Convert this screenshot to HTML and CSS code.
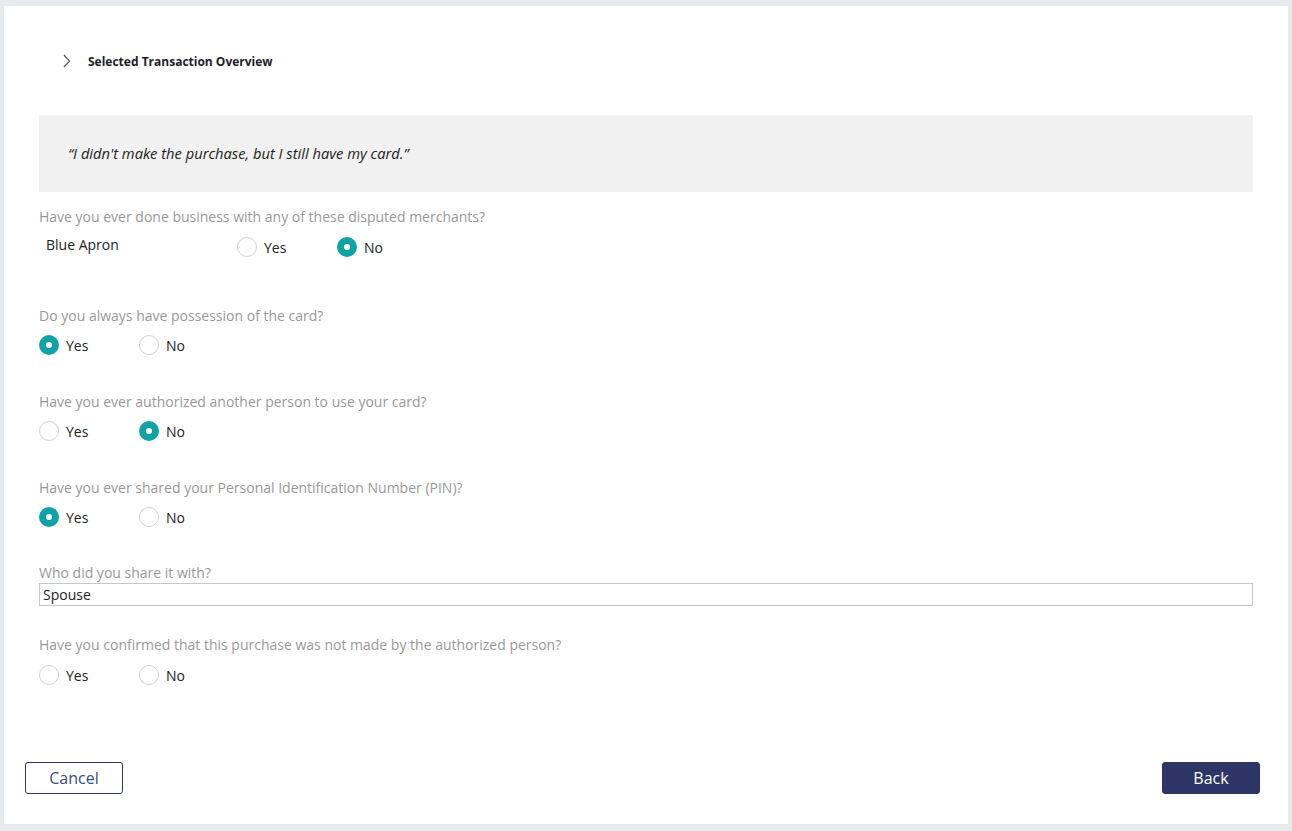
FILE: index.html
```html
<!DOCTYPE html>
<html lang="en">
<head>
    <meta charset="UTF-8">
    <title>Dispute Questions</title>
    <link rel="stylesheet" href="styles.css">
</head>
<body>
    <div class="panel">
        <div class="overview">
            <svg class="chevron" width="8" height="14" viewBox="0 0 8 14"><path d="M1 1 L6.5 7 L1 13" fill="none" stroke="#555" stroke-width="1.2"/></svg>
            <span class="overview-title">Selected Transaction Overview</span>
        </div>

        <div class="quote">&ldquo;I didn't make the purchase, but I still have my card.&rdquo;</div>

        <div class="question q-merchant">
            <div class="label">Have you ever done business with any of these disputed merchants?</div>
            <div class="merchant-row">
                <span class="merchant">Blue Apron</span>
                <div class="options">
                    <span class="option"><span class="radio"></span>Yes</span>
                    <span class="option"><span class="radio checked"></span>No</span>
                </div>
            </div>
        </div>

        <div class="question">
            <div class="label">Do you always have possession of the card?</div>
            <div class="options">
                <span class="option"><span class="radio checked"></span>Yes</span>
                <span class="option"><span class="radio"></span>No</span>
            </div>
        </div>

        <div class="question">
            <div class="label">Have you ever authorized another person to use your card?</div>
            <div class="options">
                <span class="option"><span class="radio"></span>Yes</span>
                <span class="option"><span class="radio checked"></span>No</span>
            </div>
        </div>

        <div class="question">
            <div class="label">Have you ever shared your Personal Identification Number (PIN)?</div>
            <div class="options">
                <span class="option"><span class="radio checked"></span>Yes</span>
                <span class="option"><span class="radio"></span>No</span>
            </div>
        </div>

        <div class="question q-text">
            <div class="label">Who did you share it with?</div>
            <input type="text" class="text-input" value="Spouse">
        </div>

        <div class="question">
            <div class="label">Have you confirmed that this purchase was not made by the authorized person?</div>
            <div class="options">
                <span class="option"><span class="radio"></span>Yes</span>
                <span class="option"><span class="radio"></span>No</span>
            </div>
        </div>

        <div class="actions">
            <button class="btn btn-cancel">Cancel</button>
            <button class="btn btn-back">Back</button>
        </div>
    </div>
</body>
</html>
```

FILE: styles.css
```css
body {
    margin: 0;
    padding: 6px 4px 7px 4px;
    background-color: #e7ebee;
    font-family: "Open Sans", Arial, sans-serif;
    color: #222;
}

.panel {
    background-color: #fff;
    height: 818px;
    box-sizing: border-box;
    padding: 0 35px 0 35px;
    display: flex;
    flex-direction: column;
}

/* Overview header */
.overview {
    display: flex;
    align-items: center;
    height: 24px;
    margin-top: 43px;
    padding-left: 24px;
}

.chevron {
    margin-right: 17px;
}

.overview-title {
    font-size: 12px;
    font-weight: bold;
    color: #1c1c2a;
}

/* Quote box */
.quote {
    margin-top: 42px;
    background-color: #f1f1f1;
    height: 77px;
    box-sizing: border-box;
    padding: 28px 29px 0 29px;
    font-size: 14.7px;
    font-style: italic;
    color: #222;
}

/* Questions */
.label {
    font-size: 14px;
    color: #999;
    line-height: 20px;
}

.question {
    margin-top: 35px;
}

.q-merchant {
    margin-top: 15px;
}

.q-merchant + .question {
    margin-top: 47px;
}

.merchant-row {
    display: flex;
    align-items: center;
    margin-top: 8px;
}

.merchant {
    width: 198px;
    box-sizing: border-box;
    padding-left: 7px;
    font-size: 14px;
    color: #222;
    position: relative;
    top: -3px;
}

.options {
    display: flex;
    margin-top: 7px;
}

.merchant-row .options {
    margin-top: 0;
}

.option {
    display: flex;
    align-items: center;
    width: 100px;
    height: 24px;
    font-size: 14px;
    color: #222;
}

.radio {
    width: 20px;
    height: 20px;
    box-sizing: border-box;
    border: 1px solid #cfd3d8;
    border-radius: 50%;
    margin-right: 7px;
    background-color: #fff;
}

.radio.checked {
    border: 7px solid #0fa3a6;
}

.q-text {
    margin-top: 34px;
}

.text-input {
    display: block;
    width: 100%;
    height: 23px;
    box-sizing: border-box;
    margin: 0;
    border: 1px solid #c3c8ce;
    padding: 0 3px;
    font-family: "Open Sans", Arial, sans-serif;
    font-size: 14px;
    color: #222;
}

.q-text + .question {
    margin-top: 29px;
}

.q-text + .question .options {
    margin-top: 8px;
}

/* Bottom buttons */
.actions {
    margin-top: auto;
    margin-bottom: 30px;
    margin-left: -14px;
    margin-right: -7px;
    display: flex;
    justify-content: space-between;
}

.btn {
    width: 98px;
    height: 32px;
    border-radius: 3px;
    font-family: "Open Sans", Arial, sans-serif;
    font-size: 16px;
    cursor: pointer;
}

.btn-cancel {
    background-color: #fff;
    border: 1px solid #2d3566;
    color: #3d4a8a;
}

.btn-back {
    background-color: #2d3566;
    border: 1px solid #2d3566;
    color: #fff;
}
```
